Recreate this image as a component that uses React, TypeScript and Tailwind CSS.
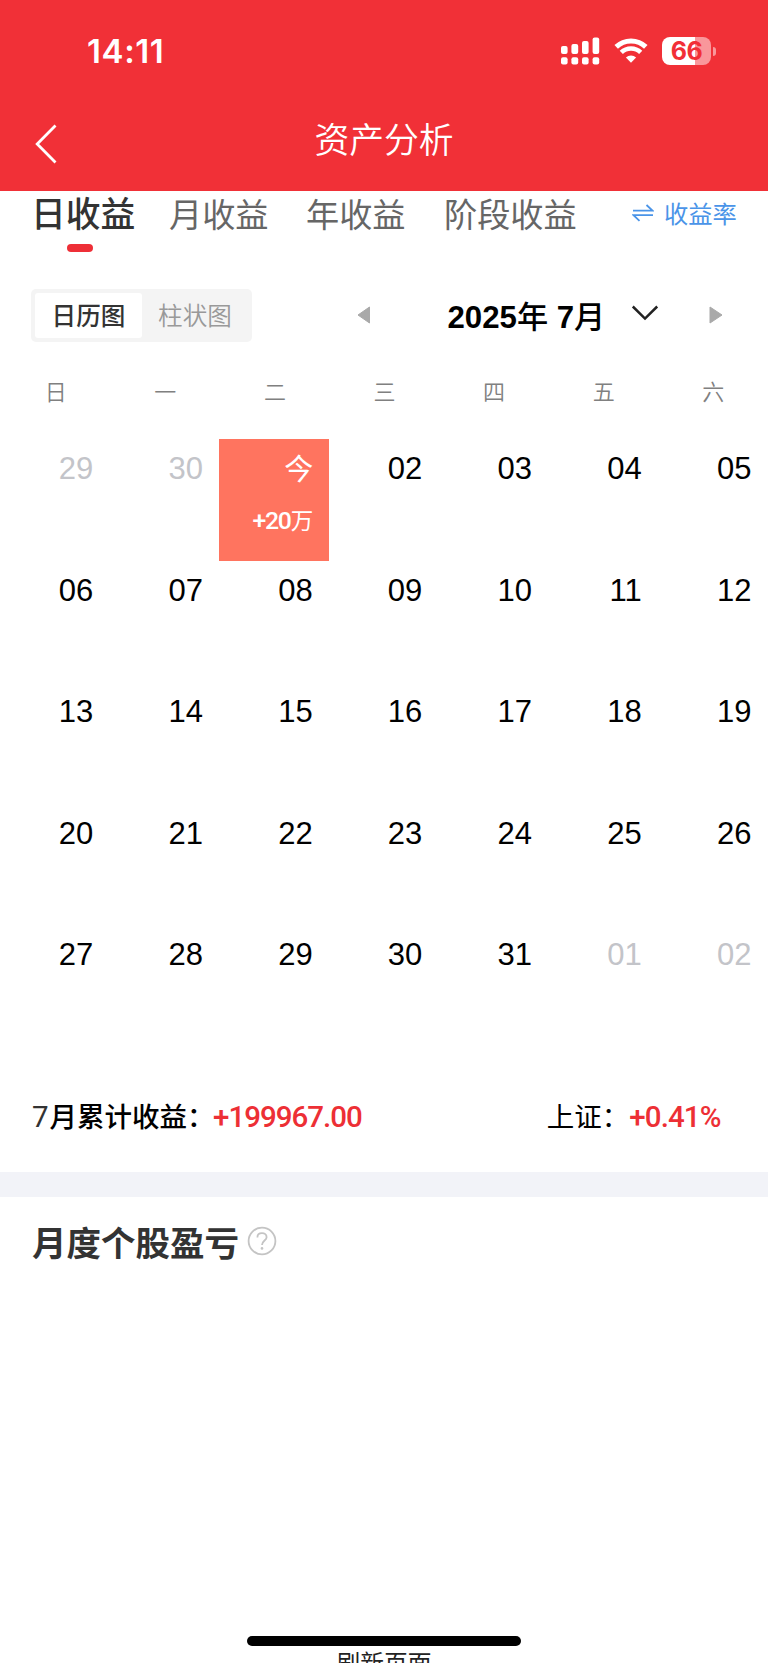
import React from "react";

const cjk = "font-['Noto_Sans_CJK_SC',sans-serif]";
const latin = "font-['Liberation_Sans','Noto_Sans_CJK_SC',sans-serif]";

const weekdays = ["日", "一", "二", "三", "四", "五", "六"];

type Day = { label: string; muted?: boolean; profit?: string };

const pad = (n: number) => String(n).padStart(2, "0");

const days: Day[] = [
  { label: "29", muted: true },
  { label: "30", muted: true },
  { label: "今", profit: "+20" },
  ...Array.from({ length: 30 }, (_, i) => ({ label: pad(i + 2) })),
  { label: "01", muted: true },
  { label: "02", muted: true },
];

function Signal() {
  return (
    <svg width="39" height="28" viewBox="0 0 39 28" fill="#fff">
      <rect x="0" y="9" width="6.6" height="8" rx="2" />
      <rect x="10.4" y="7" width="6.8" height="10" rx="2" />
      <rect x="21" y="4" width="6.6" height="13" rx="2" />
      <rect x="31.6" y="0.5" width="6.6" height="16.5" rx="2" />
      <rect x="0" y="20.3" width="6.6" height="7.2" rx="2" />
      <rect x="10.4" y="20.3" width="6.8" height="7.2" rx="2" />
      <rect x="21" y="20.3" width="6.6" height="7.2" rx="2" />
      <rect x="31.6" y="20.3" width="6.6" height="7.2" rx="2" />
    </svg>
  );
}

function Wifi() {
  return (
    <svg width="34" height="26" viewBox="0 0 34 26" fill="none">
      <path d="M2.2 8.9A21.3 21.3 0 0 1 31.8 8.9" stroke="#fff" strokeWidth="5" />
      <path d="M7.3 14.4A14 14 0 0 1 26.7 14.4" stroke="#fff" strokeWidth="4.6" />
      <path d="M17 24.8L11.9 19.6A7.2 7.2 0 0 1 22.1 19.6Z" fill="#fff" />
    </svg>
  );
}

function Battery() {
  return (
    <div className="flex items-center gap-[2px]">
      <div className="flex h-[28px] w-[49px] items-center justify-center rounded-[8px] bg-[linear-gradient(to_right,#fff_67%,#f9979b_67%)]">
        <span className="font-['Inter',sans-serif] text-[25px] leading-[28px] font-bold tracking-[-0.5px] text-[#f22f37]">66</span>
      </div>
      <div className="h-[9px] w-[3px] rounded-r-full bg-[#f9979b]" />
    </div>
  );
}

function Header() {
  return (
    <header className="h-[190.5px] shrink-0 bg-[#f13037] text-white">
      <div className="flex h-[102px] items-center justify-between pr-[52px] pl-[87px]">
        <span className="pt-[1px] font-['Inter',sans-serif] text-[33px] leading-none font-semibold tracking-[0.6px]">14:11</span>
        <div className="flex items-center gap-[14px]">
          <Signal />
          <Wifi />
          <Battery />
        </div>
      </div>
      <div className="grid h-[80px] grid-cols-[100px_1fr_100px] items-center">
        <svg className="mt-[3px] ml-[34px]" width="24" height="42" viewBox="0 0 24 42" fill="none">
          <path d="M21.5 2.5L3.2 21L21.5 39.5" stroke="#fff" strokeWidth="2.8" />
        </svg>
        <h1 className={`${cjk} -mt-[8px] text-center text-[34.8px] leading-[40px] font-[350]`}>资产分析</h1>
      </div>
    </header>
  );
}

function Tabs() {
  return (
    <nav className={`${cjk} flex h-[64px] shrink-0 items-start pl-[31px] text-[33.2px] leading-[43px] text-[#666]`}>
      <div className="flex w-[138px] flex-col text-[34.8px] font-medium text-[#333]">
        <span className="h-[53.5px]">日收益</span>
        <span className="ml-[36px] h-[8px] w-[26px] rounded-full bg-[#ee2f37]" />
      </div>
      <span className="w-[137px]">月收益</span>
      <span className="w-[138px]">年收益</span>
      <span className="w-[188px]">阶段收益</span>
      <div className="flex h-[43px] items-center gap-[10px] text-[24.3px] text-[#4a94e8]">
        <svg className="mt-[1px]" width="22" height="20" viewBox="0 0 22 20" fill="none" stroke="#4a94e8" strokeWidth="1.8">
          <path d="M1 7.6H20.5L14.5 2M21 12.2H1.5L7.5 17.8" />
        </svg>
        <span className="whitespace-nowrap">收益率</span>
      </div>
    </nav>
  );
}

function Controls() {
  return (
    <div className="mt-[34px] flex h-[53px] shrink-0 items-center pl-[31px]">
      <div className={`${cjk} flex h-[53px] w-[221px] items-center rounded-[5px] bg-[#f4f4f4] p-[4px] text-[24.6px] leading-[42px]`}>
        <span className="h-[45px] w-[107px] rounded-[3px] bg-white text-center font-medium text-[#333]">日历图</span>
        <span className="h-[45px] flex-1 text-center font-[350] text-[#999]">柱状图</span>
      </div>
      <svg className="ml-[105px]" width="14" height="18" viewBox="0 0 14 18">
        <path d="M1 9L12.5 1V17Z" fill="#a9a9a9" stroke="#a9a9a9" strokeLinejoin="round" />
      </svg>
      <span className={`${latin} ml-[76.5px] w-[183.5px] pt-[5px] text-[31.2px] leading-[54px] font-bold whitespace-nowrap text-black`}>
        2025<span className="font-medium">年</span> 7<span className="font-medium">月</span>
      </span>
      <svg className="-mt-[4px]" width="28" height="18" viewBox="0 0 28 18" fill="none">
        <path d="M1.8 2.5L14 14.6L26.2 2.5" stroke="#222" strokeWidth="2.5" />
      </svg>
      <svg className="ml-[50px]" width="14" height="18" viewBox="0 0 14 18">
        <path d="M1 1V17L13 9Z" fill="#a9a9a9" stroke="#a9a9a9" strokeLinejoin="round" />
      </svg>
    </div>
  );
}

function Calendar() {
  return (
    <section className="shrink-0">
      <div className={`${cjk} mt-[29.5px] grid h-[68px] grid-cols-7 pl-px text-center text-[22px] leading-[38px] font-[350] text-[#808080]`}>
        {weekdays.map((d) => (
          <span key={d}>{d}</span>
        ))}
      </div>
      <div className="grid auto-rows-[121.6px] grid-cols-7">
        {days.map((d, i) =>
          d.profit ? (
            <div key={i} className={`${cjk} flex h-[122px] flex-col items-end bg-[#ff745f] pr-[16px] text-white`}>
              <span className="h-[52px] text-[29px] leading-[56px]">{d.label}</span>
              <span className="flex items-baseline text-[22.5px] leading-[56px]">
                <span className="font-['Roboto',sans-serif] text-[24.8px] font-medium tracking-[-1.3px]">{d.profit}</span>
                <span>万</span>
              </span>
            </div>
          ) : (
            <div
              key={i}
              className={`${latin} pr-[16.5px] text-right text-[31px] leading-[60px] ${d.muted ? "text-[#c3c4c9]" : "text-black"}`}
            >
              {d.label}
            </div>
          ),
        )}
      </div>
    </section>
  );
}

function Summary() {
  return (
    <div className={`${cjk} flex h-[125px] shrink-0 items-start justify-between pt-[48px] pr-[47.5px] pl-[32px] text-[27.5px] leading-[40px] text-black`}>
      <div className="flex items-baseline whitespace-nowrap">
        <span className="w-[17.5px] font-['Roboto',sans-serif] text-[29.5px] text-[#333]">7</span>
        <span className="w-[163.5px] font-medium">月累计收益：</span>
        <span className="font-['Roboto',sans-serif] text-[29.5px] font-medium tracking-[-1px] text-[#ed2f35]">+199967.00</span>
      </div>
      <div className="flex items-baseline whitespace-nowrap">
        <span className="w-[82.5px]">上证：</span>
        <span className="font-['Roboto',sans-serif] text-[29.5px] font-medium tracking-[-0.9px] text-[#ed2f35]">+0.41%</span>
      </div>
    </div>
  );
}

function StockSection() {
  return (
    <section className="flex h-[438.5px] shrink-0 items-start gap-[8px] pt-[19.5px] pl-[32px]">
      <h2 className={`${cjk} text-[34.5px] leading-[48px] font-bold text-[#333]`}>月度个股盈亏</h2>
      <svg className="mt-[9px]" width="30" height="30" viewBox="0 0 30 30" fill="none" stroke="#c4c4c4" strokeWidth="1.8">
        <circle cx="15" cy="15" r="13.4" />
        <path d="M10.4 11.4C10.4 8.8 12.4 7.2 15 7.2C17.6 7.2 19.6 8.8 19.6 11.2C19.6 14.4 15 14.8 15 19" />
        <circle cx="15" cy="22.4" r="1.3" fill="#c4c4c4" stroke="none" />
      </svg>
    </section>
  );
}

export default function App() {
  return (
    <div className="flex h-[1663px] w-[768px] flex-col overflow-hidden bg-white">
      <Header />
      <Tabs />
      <Controls />
      <Calendar />
      <Summary />
      <div className="h-[25.5px] shrink-0 bg-[#f2f3f8]" />
      <StockSection />
      <footer className="flex h-[27px] shrink-0 flex-col items-center overflow-hidden">
        <div className="h-[10px] w-[274px] shrink-0 rounded-full bg-black" />
        <span className={`${cjk} text-[23.7px] leading-[32px] text-[#222]`}>刷新页面</span>
      </footer>
    </div>
  );
}
